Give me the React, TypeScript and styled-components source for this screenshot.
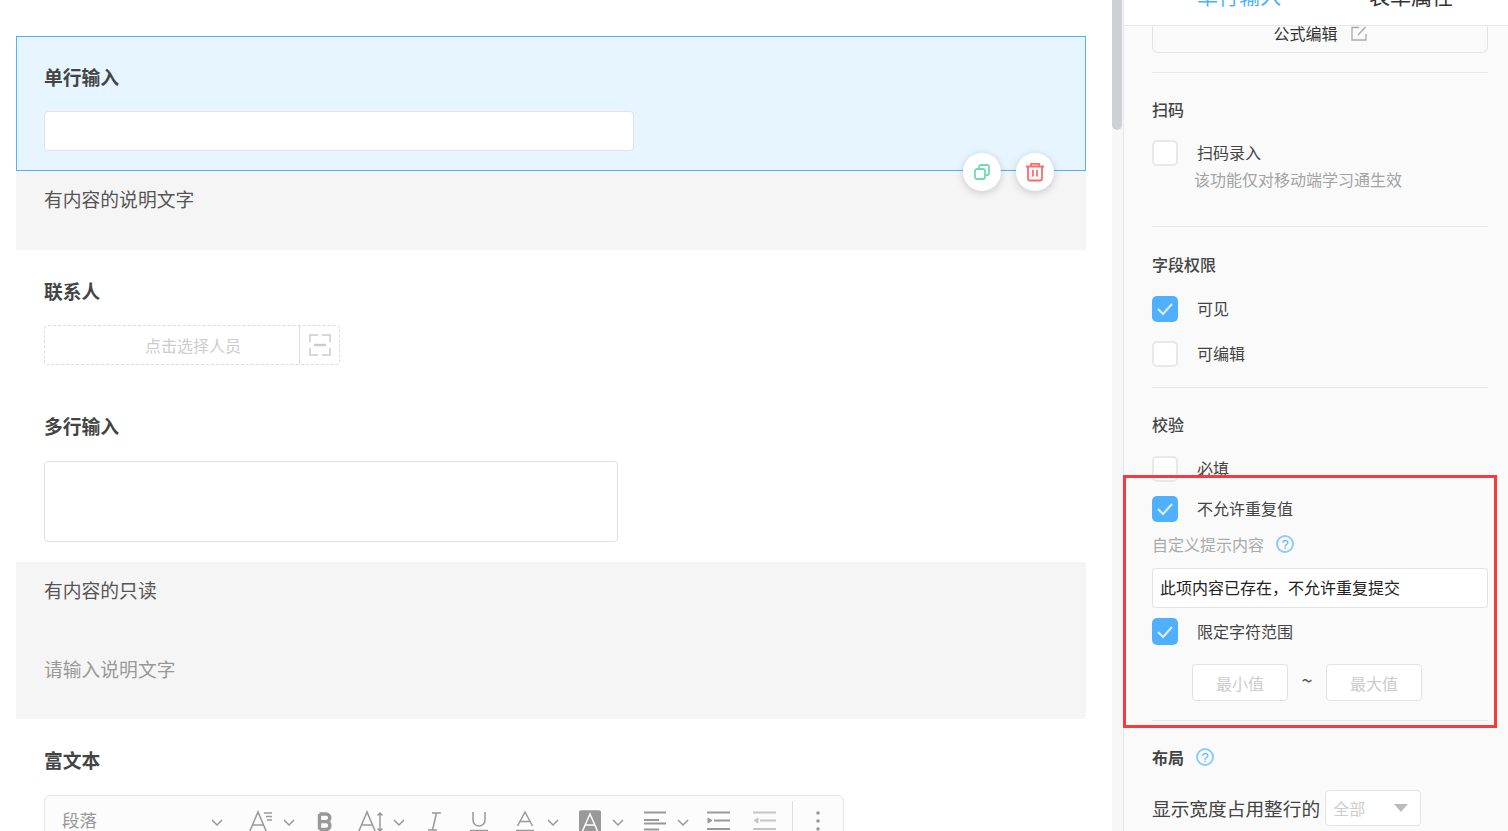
import React from 'react';
import styled, { createGlobalStyle } from 'styled-components';

const GlobalStyle = createGlobalStyle`
  html, body {
    margin: 0;
    padding: 0;
    background: #fff;
  }
  body {
    font-family: "Noto Sans CJK SC", "Liberation Sans", sans-serif;
    color: #444;
  }
  * {
    box-sizing: border-box;
  }
`;

const Page = styled.div`
  position: relative;
  display: flex;
  width: 1508px;
  height: 831px;
  overflow: hidden;
`;

const Canvas = styled.div`
  width: 1112px;
  height: 831px;
  overflow: hidden;
  padding: 36px 26px 0 16px;
  background: #fff;
`;

const SelectedField = styled.div`
  position: relative;
  height: 135px;
  padding: 29px 27px 0;
  background: #e6f5ff;
  border: 1px solid #4fb3ff;
`;

const Field = styled.div`
  padding: 30px 28px 20px;
`;

const FieldLabel = styled.div<{ $gap: number }>`
  height: 24px;
  font-size: 18.8px;
  line-height: 22px;
  font-weight: 700;
  color: #444;
  margin-bottom: ${(p) => p.$gap}px;
`;

const TextInput = styled.div`
  width: 590px;
  height: 40px;
  background: #fff;
  border: 1px solid #e3e3e3;
  border-radius: 4px;
`;

const TextArea = styled.div`
  width: 574px;
  height: 81px;
  background: #fff;
  border: 1px solid #e0e0e0;
  border-radius: 4px;
`;

const ReadOnlyBlock = styled.div<{ $height: number }>`
  height: ${(p) => p.$height}px;
  padding: 17px 28px 0;
  background: #f5f5f5;
`;

const ReadOnlyText = styled.div<{ $muted?: boolean; $top?: number }>`
  height: 24px;
  font-size: 18.8px;
  line-height: 22px;
  color: ${(p) => (p.$muted ? '#999' : '#555')};
  margin-top: ${(p) => p.$top ?? 0}px;
`;

const FloatButtons = styled.div`
  position: absolute;
  right: 31px;
  top: 116px;
  display: flex;
  gap: 15px;
  z-index: 2;
`;

const RoundButton = styled.button`
  display: flex;
  align-items: center;
  justify-content: center;
  width: 38px;
  height: 38px;
  padding: 0;
  border: none;
  border-radius: 50%;
  background: #fff;
  box-shadow: 0 2px 8px rgba(0, 0, 0, 0.18);
`;

const PersonPicker = styled.div`
  display: flex;
  width: 296px;
  height: 40px;
  border: 1px dashed #dcdcdc;
  border-radius: 4px;
`;

const PersonHint = styled.div`
  display: flex;
  align-items: center;
  justify-content: center;
  width: 255px;
  padding-left: 42px;
  font-size: 16px;
  color: #ccc;
  border-right: 1px solid #ddd;
`;

const PersonScan = styled.div`
  display: flex;
  flex: 1;
  align-items: center;
  justify-content: center;
`;

const Toolbar = styled.div`
  display: flex;
  align-items: flex-start;
  width: 800px;
  height: 70px;
  padding: 14px 0 0 17px;
  background: #fcfcfc;
  border: 1px solid #e6e6e6;
  border-radius: 6px;
`;

const ParagraphSelect = styled.div`
  width: 149px;
  font-size: 17.5px;
  line-height: 20px;
  color: #999;
`;

const Tool = styled.svg<{ $ml: number }>`
  flex: none;
  display: block;
  margin-left: ${(p) => p.$ml}px;
  fill: none;
  stroke: #999;
  stroke-width: 1.5;
`;

const ToolSeparator = styled.div`
  flex: none;
  width: 1px;
  height: 40px;
  margin: -9px 0 0 16px;
  background: #ddd;
`;

const Scrollbar = styled.div`
  width: 11px;
  height: 831px;
  background: #f7f7f7;
`;

const ScrollThumb = styled.div`
  width: 10px;
  height: 130px;
  background: #cdd0d4;
  border-radius: 0 0 5px 5px;
`;

const Panel = styled.aside`
  flex: 1;
  display: flex;
  flex-direction: column;
  height: 831px;
  background: #fafafa;
  border-left: 1px solid #e6e6e6;
`;

const PanelTabs = styled.div`
  display: flex;
  align-items: flex-end;
  flex: none;
  height: 26px;
  padding: 0 0 18px 29px;
  overflow: hidden;
  background: #fff;
  border-bottom: 1px solid #e8e8e8;
`;

const PanelTab = styled.div<{ $active?: boolean }>`
  width: 172px;
  text-align: center;
  font-size: 21px;
  line-height: 24px;
  flex: none;
  color: ${(p) => (p.$active ? '#4fb0ff' : '#333')};
`;

const PanelBody = styled.div`
  flex: 1;
  overflow: hidden;
  padding: 0 20px 0 28px;
`;

const FormulaButton = styled.div`
  display: flex;
  align-items: flex-start;
  justify-content: center;
  gap: 13px;
  height: 27px;
  border: 1px solid #e3e3e3;
  border-top: none;
  border-radius: 0 0 6px 6px;
  font-size: 16px;
  line-height: 14px;
  color: #333;
`;

const Divider = styled.div<{ $top: number }>`
  height: 1px;
  margin-top: ${(p) => p.$top}px;
  background: #e8e8e8;
`;

const SectionTitle = styled.div<{ $top?: number; $strong?: boolean }>`
  display: flex;
  align-items: center;
  gap: 12px;
  height: 24px;
  padding-bottom: 2px;
  margin-top: ${(p) => p.$top ?? 25}px;
  font-size: 16px;
  line-height: 22px;
  font-weight: ${(p) => (p.$strong ? 700 : 500)};
  color: #444;
`;

const CheckRow = styled.div<{ $top: number }>`
  display: flex;
  align-items: center;
  margin-top: ${(p) => p.$top}px;
  font-size: 16px;
  line-height: 24px;
  color: #444;
`;

const CheckText = styled.span`
  padding-bottom: 2px;
`;

const CheckBox = styled.span<{ $checked?: boolean; $tall?: boolean }>`
  display: flex;
  align-items: center;
  justify-content: center;
  flex: none;
  width: 26px;
  height: ${(p) => (p.$tall ? 27 : 26)}px;
  margin-right: 19px;
  background: ${(p) => (p.$checked ? '#4fb0ff' : '#fff')};
  border: ${(p) => (p.$checked ? '0' : '2px solid #e8e8e8')};
  border-radius: 5px;
`;

const HintText = styled.div`
  height: 24px;
  margin: 2px 0 0 42px;
  font-size: 16px;
  line-height: 22px;
  color: #a3a3a3;
`;

const MutedLabel = styled.div`
  display: flex;
  align-items: center;
  gap: 12px;
  height: 24px;
  padding-bottom: 2px;
  margin-top: 11px;
  font-size: 16px;
  line-height: 22px;
  color: #aaa;
`;

const HelpMark = styled.span`
  display: flex;
  align-items: center;
  justify-content: center;
  width: 18px;
  height: 18px;
  border: 2px solid #8ccbff;
  border-radius: 50%;
  font-family: "Liberation Sans", sans-serif;
  font-size: 13px;
  font-weight: 400;
  line-height: 1;
  color: #4fb0ff;
`;

const PromptInput = styled.div`
  height: 40px;
  margin-top: 11px;
  padding-left: 7px;
  background: #fff;
  border: 1px solid #e3e3e3;
  border-radius: 4px;
  font-size: 16px;
  line-height: 36px;
  color: #222;
`;

const RangeRow = styled.div`
  display: flex;
  align-items: center;
  margin: 19px 0 0 40px;
`;

const RangeInput = styled.div`
  width: 96px;
  height: 37px;
  background: #fff;
  border: 1px solid #e3e3e3;
  border-radius: 4px;
  font-size: 16px;
  line-height: 36px;
  text-align: center;
  color: #ccc;
`;

const RangeTilde = styled.span`
  width: 38px;
  margin-top: -6px;
  text-align: center;
  font-size: 20px;
  color: #555;
`;

const WidthRow = styled.div`
  display: flex;
  align-items: center;
  gap: 5px;
  margin-top: 20px;
  font-size: 18.7px;
  line-height: 32px;
  color: #444;
`;

const WidthSelect = styled.div`
  position: relative;
  width: 96px;
  height: 36px;
  padding-left: 7px;
  background: #fff;
  border: 1px solid #e3e3e3;
  border-radius: 4px;
  font-size: 16px;
  line-height: 34px;
  color: #ccc;
`;

const Caret = styled.span`
  position: absolute;
  right: 12px;
  top: 13px;
  border-style: solid;
  border-width: 8px 7px 0;
  border-color: #bbb transparent transparent;
`;

const Highlight = styled.div`
  position: absolute;
  left: 1123px;
  top: 475px;
  width: 374px;
  height: 253px;
  border: 3px solid #f43c3c;
  pointer-events: none;
`;

const Tick = () => (
  <svg width="18" height="14" viewBox="0 0 18 14" fill="none">
    <path d="M2 7l5 5 9-10" stroke="#d8eeff" strokeWidth="2.2" />
  </svg>
);

const Chevron = ({ ml }: { ml: number }) => (
  <Tool $ml={ml} width="12" height="22" viewBox="0 0 12 22">
    <path d="M1 10l5 5 5-5" />
  </Tool>
);

export default function App() {
  return (
    <Page>
      <GlobalStyle />
      <Canvas>
        <SelectedField>
          <FieldLabel $gap={21}>单行输入</FieldLabel>
          <TextInput />
          <FloatButtons>
            <RoundButton>
              <svg width="16" height="16" viewBox="0 0 16 16" fill="none" stroke="#72dab0" strokeWidth="1.8">
                <rect x="1" y="5" width="10" height="10" rx="2" />
                <path d="M5 5V3a2 2 0 0 1 2-2h6a2 2 0 0 1 2 2v6a2 2 0 0 1-2 2h-2" />
              </svg>
            </RoundButton>
            <RoundButton>
              <svg width="20" height="20" viewBox="0 0 20 20" fill="none" stroke="#ff6b6b" strokeWidth="1.8">
                <path d="M1 4.5h18M6 4.5V1.8h8v2.7M3 4.5v12a2 2 0 0 0 2 2h10a2 2 0 0 0 2-2v-12M8 8v6.5M12 8v6.5" />
              </svg>
            </RoundButton>
          </FloatButtons>
        </SelectedField>
        <ReadOnlyBlock $height={79}>
          <ReadOnlyText>有内容的说明文字</ReadOnlyText>
        </ReadOnlyBlock>
        <Field>
          <FieldLabel $gap={21}>联系人</FieldLabel>
          <PersonPicker>
            <PersonHint>点击选择人员</PersonHint>
            <PersonScan>
              <svg width="22" height="22" viewBox="0 0 22 22" fill="none" stroke="#ccc" strokeWidth="1.6">
                <path d="M1 8V1h8M13 1h8v7M1 14v7h8M13 21h8v-7" />
                <path d="M5 11h12" strokeWidth="2.4" />
              </svg>
            </PersonScan>
          </PersonPicker>
        </Field>
        <Field>
          <FieldLabel $gap={22}>多行输入</FieldLabel>
          <TextArea />
        </Field>
        <ReadOnlyBlock $height={157}>
          <ReadOnlyText>有内容的只读</ReadOnlyText>
          <ReadOnlyText $muted $top={55}>请输入说明文字</ReadOnlyText>
        </ReadOnlyBlock>
        <Field>
          <FieldLabel $gap={22}>富文本</FieldLabel>
          <Toolbar>
            <ParagraphSelect>段落</ParagraphSelect>
            <Chevron ml={0} />
            <Tool $ml={26} width="24" height="22" viewBox="0 0 24 22">
              <path d="M0.5 22L9 2l8.500 20M4 15h11" />
              <path d="M15 3h8M17 6.500h6M18 10h5" />
            </Tool>
            <Chevron ml={10} />
            <Tool $ml={22} width="17" height="22" viewBox="0 0 17 22">
              <path d="M2.500 4v15.500M2.500 4h6.500a3.800 3.800 0 0 1 0 7.600H2.500M9.500 11.600a4 4 0 0 1 0 7.900h-7" strokeWidth="3.4" />
            </Tool>
            <Tool $ml={24} width="26" height="22" viewBox="0 0 26 22">
              <path d="M0.500 22L9 2l8.500 20M4 15h11" />
              <path d="M22 3v18M19.500 5.500L22 3l2.500 2.500M19.500 18.500L22 21l2.500-2.500" />
            </Tool>
            <Chevron ml={9} />
            <Tool $ml={23} width="13" height="22" viewBox="0 0 13 22">
              <path d="M4 3h9M0 20h9M8.500 3L4.500 20" />
            </Tool>
            <Tool $ml={29} width="18" height="22" viewBox="0 0 18 22">
              <path d="M3 2v8a6 6 0 0 0 12 0V2M0 20.500h18" />
            </Tool>
            <Tool $ml={28} width="18" height="22" viewBox="0 0 18 22">
              <path d="M1.500 16L9 2l7.500 14M4 11.500h10M0 20.500h18" />
            </Tool>
            <Chevron ml={13} />
            <Tool $ml={20} width="22" height="24" viewBox="0 0 22 24">
              <rect x="0.500" y="1" width="21" height="23" rx="2" fill="#999" />
              <path d="M3.500 21L11 4l7.500 17M6.500 15h9" stroke="#fff" />
            </Tool>
            <Chevron ml={11} />
            <Tool $ml={20} width="22" height="22" viewBox="0 0 22 22">
              <path d="M0 2.500h22M0 10h15M0 13.500h22M0 19.500h15" strokeWidth="1.8" />
            </Tool>
            <Chevron ml={11} />
            <Tool $ml={18} width="23" height="22" viewBox="0 0 23 22">
              <path d="M0 2.500h23M7 10.500h16M0 19h23" strokeWidth="1.8" />
              <path d="M1 8v5l4-2.500z" fill="#999" strokeWidth="1" />
            </Tool>
            <Tool $ml={23} width="23" height="22" viewBox="0 0 23 22" style={{ opacity: 0.55 }}>
              <path d="M0 2.500h23M7 10.500h16M0 19h23" strokeWidth="1.8" />
              <path d="M5 8v5l-4-2.500z" fill="#999" strokeWidth="1" />
            </Tool>
            <ToolSeparator />
            <Tool $ml={22} width="6" height="22" viewBox="0 0 6 22">
              <circle cx="3" cy="3" r="1.800" fill="#999" stroke="none" />
              <circle cx="3" cy="11" r="1.800" fill="#999" stroke="none" />
              <circle cx="3" cy="19" r="1.800" fill="#999" stroke="none" />
            </Tool>
          </Toolbar>
        </Field>
      </Canvas>
      <Scrollbar>
        <ScrollThumb />
      </Scrollbar>
      <Panel>
        <PanelTabs>
          <PanelTab $active>单行输入</PanelTab>
          <PanelTab>表单属性</PanelTab>
        </PanelTabs>
        <PanelBody>
          <FormulaButton>
            公式编辑
            <svg width="16" height="15" viewBox="0 0 16 15" fill="none" stroke="#aaa" strokeWidth="1.3">
              <path d="M8 1.500H1v12.500h14V8M7 9l7.500-8" />
            </svg>
          </FormulaButton>
          <Divider $top={19} />
          <SectionTitle>扫码</SectionTitle>
          <CheckRow $top={18}>
            <CheckBox />
            <CheckText>扫码录入</CheckText>
          </CheckRow>
          <HintText>该功能仅对移动端学习通生效</HintText>
          <Divider $top={34} />
          <SectionTitle $top={26}>字段权限</SectionTitle>
          <CheckRow $top={19}>
            <CheckBox $checked>
              <Tick />
            </CheckBox>
            <CheckText>可见</CheckText>
          </CheckRow>
          <CheckRow $top={19}>
            <CheckBox />
            <CheckText>可编辑</CheckText>
          </CheckRow>
          <Divider $top={20} />
          <SectionTitle>校验</SectionTitle>
          <CheckRow $top={19}>
            <CheckBox />
            <CheckText>必填</CheckText>
          </CheckRow>
          <CheckRow $top={14}>
            <CheckBox $checked>
              <Tick />
            </CheckBox>
            <CheckText>不允许重复值</CheckText>
          </CheckRow>
          <MutedLabel>
            自定义提示内容
            <HelpMark>?</HelpMark>
          </MutedLabel>
          <PromptInput>此项内容已存在，不允许重复提交</PromptInput>
          <CheckRow $top={10}>
            <CheckBox $checked $tall>
              <Tick />
            </CheckBox>
            <CheckText>限定字符范围</CheckText>
          </CheckRow>
          <RangeRow>
            <RangeInput>最小值</RangeInput>
            <RangeTilde>~</RangeTilde>
            <RangeInput>最大值</RangeInput>
          </RangeRow>
          <Divider $top={19} />
          <SectionTitle $strong>
            布局
            <HelpMark>?</HelpMark>
          </SectionTitle>
          <WidthRow>
            显示宽度占用整行的
            <WidthSelect>
              全部
              <Caret />
            </WidthSelect>
          </WidthRow>
        </PanelBody>
      </Panel>
      <Highlight />
    </Page>
  );
}
